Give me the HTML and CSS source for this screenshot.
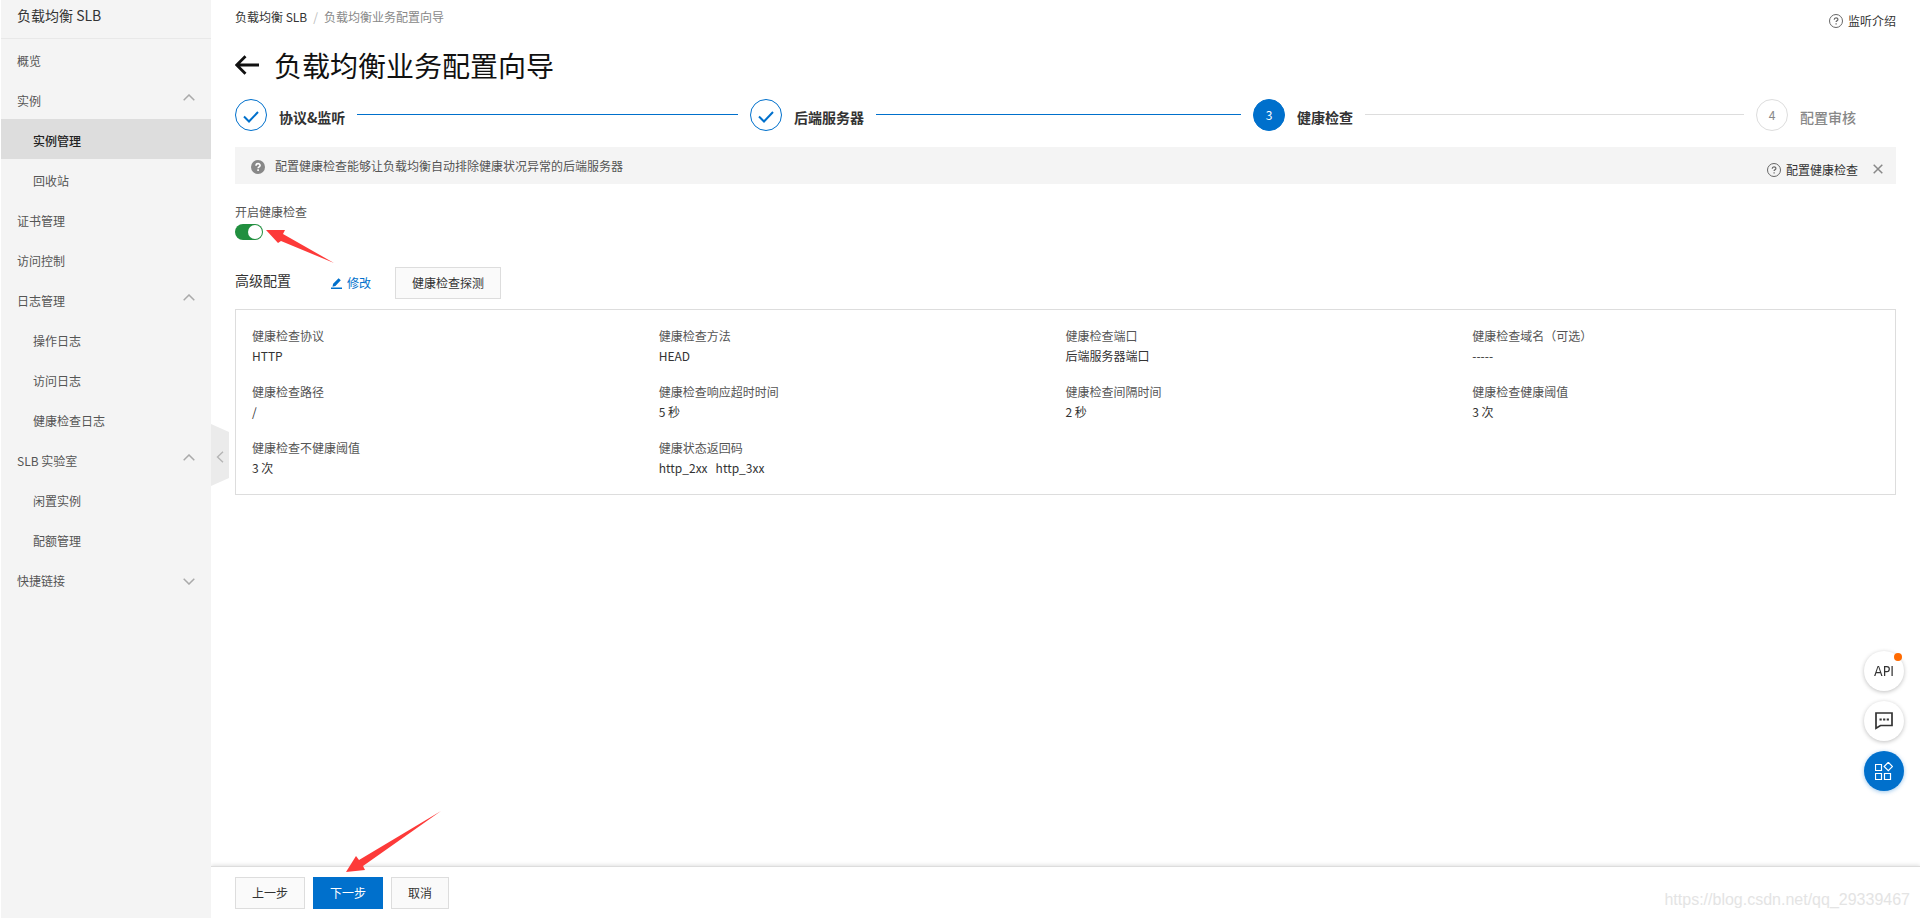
FILE: index.html
```html
<!DOCTYPE html>
<html lang="zh-CN">
<head>
<meta charset="utf-8">
<title>负载均衡业务配置向导</title>
<link rel="stylesheet" href="styles.css">
</head>
<body>
<svg class="defs" aria-hidden="true">
  <symbol id="chevron" viewBox="0 0 12 7"><path d="M.7 6.3 6 1l5.3 5.3" fill="none" stroke="currentColor" stroke-width="1.5"/></symbol>
  <symbol id="tick" viewBox="0 0 16 12"><path d="M1 5.500 6 10.500 15 1" fill="none" stroke="currentColor" stroke-width="2"/></symbol>
  <symbol id="help" viewBox="0 0 14 14"><circle cx="7" cy="7" r="6.500" fill="none" stroke="currentColor"/><path d="M5.200 5.700c0-2.400 3.700-2.400 3.700-.2 0 1.300-1.800 1.300-1.800 2.600M7.100 9.300v1.300" fill="none" stroke="currentColor" stroke-width="1.200"/></symbol>
</svg>
<div class="page">
  <aside class="sidebar">
    <h2 class="sidebar-title">负载均衡 SLB</h2>
    <nav class="menu">
      <a class="menu-item" href="#">概览</a>
      <button class="menu-item" type="button">实例<svg class="chevron"><use href="#chevron"/></svg></button>
      <a class="menu-item sub active" href="#">实例管理</a>
      <a class="menu-item sub" href="#">回收站</a>
      <a class="menu-item" href="#">证书管理</a>
      <a class="menu-item" href="#">访问控制</a>
      <button class="menu-item" type="button">日志管理<svg class="chevron"><use href="#chevron"/></svg></button>
      <a class="menu-item sub" href="#">操作日志</a>
      <a class="menu-item sub" href="#">访问日志</a>
      <a class="menu-item sub" href="#">健康检查日志</a>
      <button class="menu-item" type="button">SLB 实验室<svg class="chevron"><use href="#chevron"/></svg></button>
      <a class="menu-item sub" href="#">闲置实例</a>
      <a class="menu-item sub" href="#">配额管理</a>
      <button class="menu-item" type="button">快捷链接<svg class="chevron down"><use href="#chevron"/></svg></button>
    </nav>
    <button class="collapse" type="button" aria-label="收起">
      <svg width="8" height="12" viewBox="0 0 8 12"><path d="M7 .7 1.500 6 7 11.300" fill="none" stroke="#b5b5b5" stroke-width="1.400"/></svg>
    </button>
  </aside>

  <div class="main">
    <main class="content">
      <header class="topbar">
        <nav class="breadcrumb"><a href="#">负载均衡 SLB</a><span class="slash">/</span><span class="current">负载均衡业务配置向导</span></nav>
        <a class="help-link intro" href="#"><svg><use href="#help"/></svg>监听介绍</a>
      </header>
      <div class="title-row">
        <a class="back" href="#" aria-label="返回"><svg width="24" height="20" viewBox="0 0 24 20"><path d="M24 10H2M10.500 1.200 1.700 10l8.800 8.800" fill="none" stroke="#111" stroke-width="2.800"/></svg></a>
        <h1>负载均衡业务配置向导</h1>
      </div>

      <ol class="steps">
        <li class="step done"><span class="dot"><svg class="tick"><use href="#tick"/></svg></span><span class="step-label">协议&amp;监听</span><span class="line"></span></li>
        <li class="step done"><span class="dot"><svg class="tick"><use href="#tick"/></svg></span><span class="step-label">后端服务器</span><span class="line"></span></li>
        <li class="step current"><span class="dot">3</span><span class="step-label">健康检查</span><span class="line"></span></li>
        <li class="step wait"><span class="dot">4</span><span class="step-label">配置审核</span></li>
      </ol>

      <div class="notice">
        <svg class="notice-icon" viewBox="0 0 14 14"><circle cx="7" cy="7" r="7" fill="#888"/><path d="M5 5.700c0-2.700 4.100-2.700 4.100-.2 0 1.400-2 1.300-2 2.700M7.100 9.300v1.700" fill="none" stroke="#fff" stroke-width="1.600"/></svg>
        <p>配置健康检查能够让负载均衡自动排除健康状况异常的后端服务器</p>
        <a class="help-link" href="#"><svg><use href="#help"/></svg>配置健康检查</a>
        <button class="close" type="button" aria-label="关闭"><svg width="10" height="10" viewBox="0 0 10 10"><path d="m.7.7 8.600 8.600m0-8.600L.7 9.300" stroke="#888" stroke-width="1.500"/></svg></button>
      </div>

      <div class="switch-field">
        <label for="health-switch">开启健康检查</label>
        <input class="switch" id="health-switch" type="checkbox" role="switch" checked>
        <svg class="mark mark-switch" viewBox="0 0 68 33"><path d="M0 0h19l-2 4 51 29-53-22-3 2z" fill="#fd3a39"/></svg>
      </div>

      <div class="advanced">
        <h3>高级配置</h3>
        <a class="edit" href="#"><svg width="12" height="11" viewBox="0 0 12 11"><path d="M0 9.500h11V11H0zM1.500 8.700l.6-3L7.600.2l2.200 2L4.400 7.900z" fill="currentColor"/></svg>修改</a>
        <button class="btn" type="button">健康检查探测</button>
      </div>

      <dl class="details">
        <div><dt>健康检查协议</dt><dd>HTTP</dd></div>
        <div><dt>健康检查方法</dt><dd>HEAD</dd></div>
        <div><dt>健康检查端口</dt><dd>后端服务器端口</dd></div>
        <div><dt>健康检查域名（可选）</dt><dd>-----</dd></div>
        <div><dt>健康检查路径</dt><dd>/</dd></div>
        <div><dt>健康检查响应超时时间</dt><dd>5 秒</dd></div>
        <div><dt>健康检查间隔时间</dt><dd>2 秒</dd></div>
        <div><dt>健康检查健康阈值</dt><dd>3 次</dd></div>
        <div><dt>健康检查不健康阈值</dt><dd>3 次</dd></div>
        <div><dt>健康状态返回码</dt><dd class="codes"><span>http_2xx</span><span>http_3xx</span></dd></div>
      </dl>
    </main>

    <footer class="footer">
      <button class="btn" type="button">上一步</button>
      <button class="btn primary" type="button">下一步</button>
      <button class="btn" type="button">取消</button>
      <svg class="mark mark-next" viewBox="0 0 95 61"><path d="m0 61 10-16 3 4L95 0 17 55l2 4z" fill="#fd3a39"/></svg>
      <span class="watermark">https://blog.csdn.net/qq_29339467</span>
    </footer>
  </div>

  <div class="float-tools">
    <button class="tool api" type="button">API<span class="badge"></span></button>
    <button class="tool" type="button" aria-label="反馈"><svg width="18" height="18" viewBox="0 0 18 18"><path d="M1 1h16v12.500H5.500L1 16.300z" fill="none" stroke="#333" stroke-width="1.700"/><path d="M4.500 6.500h2.200v2H4.500zm3.600 0h2.200v2H8.100zm3.600 0h2.200v2h-2.200z" fill="#333"/></svg></button>
    <button class="tool blue" type="button" aria-label="应用"><svg width="18" height="18" viewBox="0 0 18 18"><path d="M.5 2.500h6v6h-6zm0 9h6v6h-6zm9 0h6v6h-6zM13.300.3l4.200 4.200-4.200 4.200-4.200-4.200z" fill="none" stroke="#fff" stroke-width="1.200"/></svg></button>
  </div>
</div>
</body>
</html>
```
FILE: styles.css
```css
* { box-sizing: border-box; }
body {
  margin: 0;
  background: #fff;
  color: #333;
  font: 12px/20px "Noto Sans CJK SC", sans-serif;
}
h1, h2, h3, p, dl, dd, ol { margin: 0; padding: 0; }
a { color: inherit; text-decoration: none; }
button { font: inherit; color: inherit; cursor: pointer; }
svg { display: block; flex: none; }
.defs { position: absolute; width: 0; height: 0; }

.page { display: flex; min-height: 100vh; padding-left: 1px; }

/* Sidebar */
.sidebar { position: relative; flex: none; width: 210px; background: #f4f4f4; }
.sidebar-title {
  height: 39px;
  padding: 3px 16px;
  border-bottom: 1px solid #e8e8e8;
  font-size: 14px;
  font-weight: 400;
  line-height: 24px;
}
.menu-item {
  display: flex;
  align-items: center;
  justify-content: space-between;
  width: 100%;
  height: 40px;
  padding: 4px 16px 0;
  border: 0;
  background: none;
  color: #555;
  text-align: left;
}
.menu-item.sub { padding-left: 32px; }
.menu-item.active { background: #ddd; color: #222; font-weight: 500; }
.chevron { width: 12px; height: 7px; margin-bottom: 8px; color: #aaa; }
.chevron.down { transform: rotate(180deg); margin-bottom: 0; }
.collapse {
  position: absolute;
  top: 424px;
  left: 100%;
  display: flex;
  align-items: center;
  justify-content: center;
  width: 18px;
  height: 62px;
  padding: 4px 0 0;
  border: 0;
  background: #ebebeb;
  clip-path: polygon(0 0, 100% 8px, 100% 54px, 0 100%);
}

/* Main column */
.main { display: flex; flex: 1; flex-direction: column; min-width: 0; }
.content { flex: 1; padding: 7px 24px 24px; }
.topbar { display: flex; justify-content: space-between; height: 38px; }
.breadcrumb { display: flex; height: 20px; gap: 6px; color: #333; }
.slash { color: #bbb; }
.breadcrumb .current { color: #888; }
.help-link { display: flex; align-items: center; gap: 5px; height: 20px; color: #333; }
.help-link svg { width: 14px; height: 14px; color: #666; }
.intro { margin-top: 4px; }

.title-row { display: flex; align-items: center; gap: 15px; height: 40px; }
h1 { color: #111; font-size: 28px; font-weight: 400; line-height: 40px; }

.steps {
  display: grid;
  grid-template-columns: 515fr 503fr 503fr 140px;
  margin-top: 14px;
  list-style: none;
}
.step { display: flex; align-items: center; gap: 12px; padding-right: 12px; }
.dot {
  display: flex;
  flex: none;
  align-items: center;
  justify-content: center;
  width: 32px;
  height: 32px;
  border: 1px solid #0070cc;
  border-radius: 50%;
  color: #0070cc;
}
.tick { width: 16px; height: 12px; margin-top: 4px; }
.step-label { padding-top: 4px; font-size: 14px; font-weight: 700; white-space: nowrap; }
.line { flex: 1; height: 1px; margin-bottom: 2px; background: #0070cc; }
.step.current .dot { background: #0070cc; color: #fff; }
.step.current .line { background: #ddd; }
.step.wait .dot { border-color: #ddd; color: #888; }
.step.wait .step-label { color: #888; font-weight: 500; }

.notice {
  display: flex;
  align-items: center;
  min-height: 37px;
  margin-top: 16px;
  padding: 0 13px 0 16px;
  background: #f4f4f4;
  color: #555;
}
.notice-icon { width: 14px; height: 14px; margin: 3px 10px 0 0; }
.notice p { flex: 1; }
.notice .help-link { margin-top: 8px; }
.close { margin: 7px 0 0 15px; padding: 0; border: 0; background: none; }

.switch-field { position: relative; display: flex; flex-direction: column; align-items: flex-start; gap: 2px; margin-top: 18px; color: #555; }
.switch {
  width: 28px;
  height: 16px;
  margin: 0;
  padding: 1px;
  border-radius: 8px;
  background: #218f3f;
  appearance: none;
}
.switch::before {
  display: block;
  width: 14px;
  height: 14px;
  margin-left: 12px;
  border-radius: 50%;
  background: #fff;
  content: "";
}
.mark { position: absolute; pointer-events: none; }
.mark-switch { top: 28px; left: 31px; width: 68px; height: 33px; }

.advanced { display: flex; align-items: center; margin-top: 27px; }
h3 { margin-bottom: 6px; font-size: 14px; font-weight: 400; }
.edit { display: flex; align-items: center; gap: 4px; margin: 0 24px 0 40px; color: #0070cc; }
.btn {
  height: 32px;
  padding: 0 16px;
  border: 1px solid #ddd;
  background: #fafafa;
  line-height: 30px;
}
.btn.primary { border-color: #0070cc; background: #0070cc; color: #fff; }

.details {
  display: grid;
  grid-template-columns: repeat(4, 1fr);
  row-gap: 16px;
  margin-top: 10px;
  padding: 16px;
  border: 1px solid #ddd;
}
dt { color: #555; }
.codes { display: flex; gap: 8px; }

/* Footer */
.footer {
  position: relative;
  display: flex;
  gap: 8px;
  padding: 10px 24px 9px;
  border-top: 1px solid #ddd;
  box-shadow: 0 -1px 4px rgba(0, 0, 0, .12);
  clip-path: inset(-80px 0 0 0);
}
.mark-next { bottom: 46px; left: 135px; width: 95px; height: 61px; }
.watermark {
  position: absolute;
  right: 10px;
  bottom: 8px;
  color: #e4e4e4;
  font: 16px/20px "Liberation Sans", sans-serif;
}

/* Floating tools */
.float-tools { position: fixed; right: 16px; bottom: 127px; display: grid; gap: 10px; }
.tool {
  position: relative;
  display: flex;
  align-items: center;
  justify-content: center;
  width: 40px;
  height: 40px;
  padding: 0;
  border: 0;
  border-radius: 50%;
  background: #fff;
  box-shadow: 0 1px 4px rgba(0, 0, 0, .25);
}
.tool.api { font: 14px/20px "Liberation Sans Narrow", "DejaVu Sans Condensed", sans-serif; }
.tool.blue { background: #0070cc; box-shadow: 0 1px 4px rgba(0, 112, 204, .4); }
.badge { position: absolute; top: 2px; right: 2px; width: 8px; height: 8px; border-radius: 50%; background: #ff6a00; }
```
